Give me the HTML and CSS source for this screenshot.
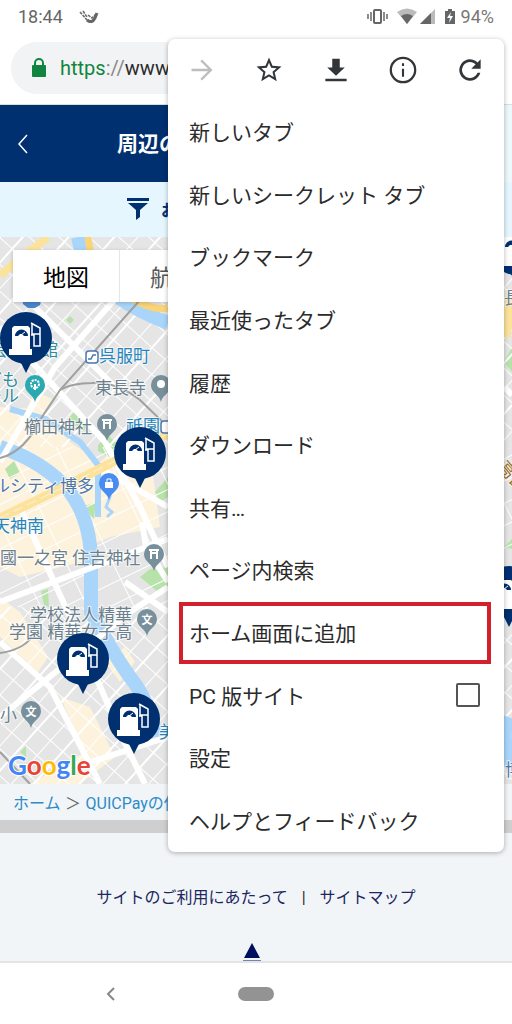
FILE: index.html
```html
<!DOCTYPE html>
<html lang="ja">
<head>
  <meta charset="UTF-8" />
  <meta name="viewport" content="width=device-width, initial-scale=1.0"/>
  <title>周辺の店舗</title>
  <link rel="stylesheet" href="styles.css">
</head>
<body>
  <div class="status-bar">
    <span class="clock">18:44</span>
    <svg class="status-call" width="20" height="16" viewBox="0 0 20 16" fill="none" stroke="#666">
      <path d="M8 11Q13 15 16 9L18 4" stroke-width="3"/>
      <path d="M1 3l7 8M4 2l4 6M9 6l4 3 4-4" stroke-width="1.500" stroke-dasharray="3 1"/>
    </svg>
    <svg class="status-icons" width="90" height="18" viewBox="0 0 90 18">
      <g fill="none" stroke="#666" stroke-width="2">
        <rect x="7" y="2" width="7" height="13" rx="1"/>
        <path d="M4 4v9M17 4v9M1 6v5M20 6v5" stroke-width="1.500"/>
      </g>
      <path d="M30 4Q40-3 50 4L40 16z" fill="#bbb"/>
      <path d="M34 8Q40 4 46 8L40 16z" fill="#666"/>
      <path d="M68 1v15H53z" fill="#bbb"/>
      <path d="M64 5v11H53z" fill="#666"/>
      <path d="M78 3h3V1h4v2h3v13H78z" fill="#666"/>
      <path d="M84 4l-4 6h3l-1 5 4-7h-3z" fill="#fff"/>
    </svg>
    <span class="battery">94%</span>
  </div>

  <div class="toolbar">
    <div class="address">
      <svg width="16" height="20" viewBox="0 0 16 20">
        <rect x="1" y="7" width="14" height="12" rx="1" fill="#11853f"/>
        <path d="M4 8V5a4 4 0 0 1 8 0v3" fill="none" stroke="#11853f" stroke-width="2"/>
      </svg>
      <span class="url"><span class="scheme">https</span><span class="slashes">://</span>www.</span>
    </div>
  </div>

  <div class="page">
    <header class="page-header">
      <a href="#" class="back" aria-label="戻る">
        <svg width="12" height="20" viewBox="0 0 12 20" fill="none" stroke="#fff" stroke-width="1.500"><path d="M10 1L2 10l8 9"/></svg>
      </a>
      <h1>周辺の店舗</h1>
    </header>
    <div class="filter">
      <button type="button">
        <svg width="22" height="22" viewBox="0 0 22 22" fill="#003070">
          <path d="M0 0h22v3H0zM1 5h20l-8 7v7l-4 3V12z"/>
        </svg>
        お店を絞り込む
      </button>
    </div>

    <div class="map">
      <svg class="map-canvas" width="512" height="547" viewBox="0 0 512 547">
        <defs>
          <pattern id="blocks" width="34" height="20" patternUnits="userSpaceOnUse" patternTransform="rotate(42)">
            <path d="M0 0H34M0 0V20M17 0V20" stroke="#fff" stroke-width="2"/>
          </pattern>
          <pattern id="blocksWide" width="42" height="20" patternUnits="userSpaceOnUse" patternTransform="rotate(-26)">
            <path d="M0 0H42M0 0V20" stroke="#fff" stroke-width="2"/>
          </pattern>
          <g id="station">
            <path d="M-8 19h16L0 35z" fill="#003070"/>
            <circle r="26" fill="#003070"/>
            <path d="M-14-10L-12-12H2L4-10V11H6V17H-17V11H-14z" fill="#fff"/>
            <path d="M-11-2A6 6 0 0 1 2-2H-2L-4-4H-6L-8-2z" fill="#003070"/>
            <path d="M-5-3L-1-6" stroke="#fff"/>
            <path d="M5-15L14-10V8H8V-3H5M6-14V-4H14" fill="none" stroke="#fff" stroke-width="1.500"/>
          </g>
          <path id="drop" d="M0 16C-2 8-10 7-10-1A10 10 0 0 1 10-1C10 7 2 8 0 16z"/>
          <path id="torii" d="M-5-4H5M-4-1H4M-3-4V5M3-4V5" fill="none" stroke="#fff" stroke-width="2"/>
        </defs>

        <rect width="512" height="547" fill="#e5e5e5"/>
        <!-- shopping areas -->
        <g fill="#fdf2dc">
          <path d="M35 154L52 162 42 178 25 175z"/>
          <path d="M0 170L40 172 70 205 100 225 128 200 150 215 160 290 110 300 40 330 0 300z"/>
          <path d="M0 290L45 270 85 300 82 325 20 340 0 330z"/>
          <path d="M0 360L20 375 48 420 38 435 0 400z"/>
          <path d="M60 460L90 470 115 520 80 547 30 547 85 515z"/>
          <path d="M105 425L125 410 135 425 120 445z"/>
        </g>
        <!-- parks -->
        <g fill="#b7e3ab">
          <path d="M66 83L70 79 74 83 70 87z"/>
          <path d="M68 182L75 174 92 185 84 194z"/>
          <path d="M98 208L108 198 122 212 114 223 98 214z"/>
          <path d="M5 232L14 224 20 236 10 242z"/>
          <path d="M82 270L96 265 94 282z"/>
          <path d="M155 255L168 240V260L160 265z"/>
          <path d="M140 340L150 332 168 330V352L158 355z"/>
          <path d="M41 354L48 352 49 370 44 368z"/>
          <path d="M20 515L26 509 26 520z"/>
          <path d="M504 125L512 110V135zM504 310L512 302V312z"/>
        </g>
        <rect width="512" height="210" fill="url(#blocks)"/>
        <rect y="210" width="512" height="160" fill="url(#blocksWide)"/>
        <rect y="370" width="512" height="177" fill="url(#blocks)"/>

        <!-- rivers -->
        <g fill="none" stroke="#a9d5fb">
          <path d="M78 0L84 25Q106 62 168 86" stroke-width="14"/>
          <path d="M0 210Q45 225 70 255Q92 285 91 330V375Q112 415 130 440Q150 465 156 500" stroke-width="14"/>
          <path d="M10 172L45 182 80 205 98 228V280" stroke-width="6"/>
          <path d="M110 250V260L106 270 112 275 107 280" stroke-width="3"/>
          <path d="M508 480Q500 500 512 530" stroke-width="14"/>
        </g>

        <!-- roads -->
        <g fill="none" stroke="#fff" stroke-width="6">
          <path d="M0 90L105 205 140 270 168 330M130 45L55 130 0 225M35 70L120 155"/>
          <path d="M98 230L168 270M142 285L146 310 168 345M0 365L168 302"/>
          <path d="M20 270L70 380 122 500 145 547M0 480L130 375 168 350"/>
          <path d="M60 535L168 500M0 405L50 450 100 547M125 345L168 375"/>
          <path d="M504 340L512 350M504 150L512 158"/>
        </g>
        <g fill="none" stroke="#f9d479">
          <path d="M88 0Q91 35 121 55T168 71" stroke-width="7"/>
          <path d="M0 38L48 0" stroke="#fbe39b" stroke-width="8"/>
          <path d="M0 281L60 252 168 197" stroke="#fce29a" stroke-width="9"/>
          <path d="M0 281L60 252 168 197" stroke="#fdf2dc" stroke-dasharray="10 5"/>
          <path d="M504 100L512 60" stroke="#fbe39b" stroke-width="12"/>
        </g>
        <g fill="none" stroke="#a0a0a0" stroke-width="2">
          <path d="M140 63L60 153 42 180Q25 215 0 221"/>
          <path d="M60 153Q72 146 92 146Q115 144 140 163L168 190"/>
          <path d="M0 416Q22 413 32 400M0 515L30 547"/>
        </g>

        <!-- place markers -->
        <path d="M22 60H42L40 68 35 71H28L23 67z" fill="#4b85c9"/>
        <use href="#drop" x="35" y="149" fill="#2ba9b0"/>
        <circle cx="35" cy="147" r="4" fill="none" stroke="#fff" stroke-width="2" stroke-dasharray="2 1"/>
        <path d="M35 147V153" stroke="#fff" stroke-width="2"/>
        <use href="#drop" x="161" y="149" fill="#78909c"/>
        <circle cx="161" cy="147" r="4" fill="#fff"/>
        <use href="#drop" x="107" y="188" fill="#78909c"/>
        <use href="#torii" x="107" y="187"/>
        <use href="#drop" x="109" y="247" fill="#4a8df0"/>
        <path d="M105 245H113V251H105z" fill="#fff"/>
        <path d="M107 246V242H111V246" fill="none" stroke="#fff"/>
        <use href="#drop" x="154" y="318" fill="#78909c"/>
        <use href="#torii" x="154" y="317"/>
        <use href="#drop" x="147" y="383" fill="#78909c"/>
        <use href="#drop" x="31" y="475" fill="#78909c"/>
        <g class="school" text-anchor="middle">
          <text x="147" y="387">文</text>
          <text x="31" y="479">文</text>
        </g>
        <g fill="#fff" stroke="#4a78b0" stroke-width="1.500">
          <rect x="86" y="114" width="12" height="12" rx="3"/>
          <rect x="161" y="184" width="12" height="12" rx="3"/>
          <path d="M88 122H91L93 118H96" fill="none"/>
        </g>

        <g class="label transit">
          <text x="99" y="125">呉服町</text>
          <text x="126" y="195">祇園</text>
          <text x="-7" y="295">天神南</text>
          <text x="159" y="501">美</text>
        </g>
        <g class="label culture">
          <text x="-10" y="119">芸術会館</text>
          <text x="-32" y="149">こども</text>
          <text x="-32" y="165">ホール</text>
        </g>
        <g class="label place">
          <text x="95" y="157">東長寺</text>
          <text x="24" y="196">櫛田神社</text>
          <text x="-7" y="255" class="shop">ルシティ博多</text>
          <text x="0" y="327">國一之宮 住吉神社</text>
          <text x="30" y="384">学校法人精華</text>
          <text x="9" y="401">学園 精華女子高</text>
          <text x="0" y="484">小</text>
          <text x="504" y="67">長</text>
          <text x="505" y="539" class="shop">博</text>
        </g>
        <text class="label road" x="497" y="230" transform="rotate(50 497 230)">高宮</text>

        <use href="#station" x="26" y="101"/>
        <use href="#station" x="140" y="216"/>
        <use href="#station" x="83" y="422"/>
        <use href="#station" x="134" y="482"/>
        <use href="#station" x="516" y="12"/>
        <use href="#station" x="509" y="355"/>

        <text class="google" x="8" y="538"><tspan fill="#4285f4">G</tspan><tspan fill="#ea4335">o</tspan><tspan fill="#fbbc05">o</tspan><tspan fill="#4285f4">g</tspan><tspan fill="#34a853">l</tspan><tspan fill="#ea4335">e</tspan></text>
      </svg>
      <div class="map-type">
        <button type="button" class="active">地図</button>
        <button type="button">航空写真</button>
      </div>
    </div>

    <nav class="breadcrumb">
      <a href="#">ホーム</a><span>＞</span><a href="#">QUICPayの使えるお店</a>
    </nav>

    <footer class="page-footer">
      <div class="footer-links">
        <a href="#">サイトのご利用にあたって</a>
        <span>|</span>
        <a href="#">サイトマップ</a>
      </div>
      <a href="#" class="to-top" aria-label="ページの先頭へ">
        <svg width="18" height="18" viewBox="0 0 18 18"><path d="M9 0l8 15H1z" fill="#000f60"/><path d="M0 17.500h18" stroke="#7a80ac"/></svg>
      </a>
    </footer>
  </div>

  <div class="system-nav">
    <button type="button" aria-label="戻る">
      <svg width="10" height="14" viewBox="0 0 10 14" fill="none" stroke="#888" stroke-width="2"><path d="M8 1L2 7l6 6"/></svg>
    </button>
    <button type="button" aria-label="ホーム"><span class="home-pill"></span></button>
  </div>

  <div class="menu">
    <div class="menu-actions">
      <button type="button" aria-label="進む" disabled>
        <svg width="28" height="28" viewBox="0 0 24 24"><path d="M12 3l-1.400 1.400 6.600 6.600H3v2h14.200l-6.600 6.600L12 21l9-9z"/></svg>
      </button>
      <button type="button" aria-label="ブックマークに追加">
        <svg width="30" height="30" viewBox="0 0 24 24"><path d="M22 9.240l-7.190-.620L12 2 9.190 8.630 2 9.240l5.460 4.730L5.820 21 12 17.270 18.180 21l-1.630-7.030L22 9.240zM12 15.400l-3.760 2.270 1-4.280-3.320-2.880 4.380-.380L12 6.100l1.710 4.040 4.380.380-3.320 2.880 1 4.280L12 15.400z"/></svg>
      </button>
      <button type="button" aria-label="ダウンロード">
        <svg width="30" height="30" viewBox="0 0 24 24"><path d="M19 10h-4V3H9v7H5l7 6.500zM3.500 19v2h17v-2z"/></svg>
      </button>
      <button type="button" aria-label="情報">
        <svg width="32" height="32" viewBox="0 0 24 24"><path d="M11.200 7h1.600v2h-1.600zm0 4h1.600v6h-1.600zm.8-9a10 10 0 1 0 0 20 10 10 0 0 0 0-20zm0 18.300a8.300 8.300 0 1 1 0-16.600 8.300 8.300 0 0 1 0 16.600z"/></svg>
      </button>
      <button type="button" aria-label="再読み込み">
        <svg width="32" height="32" viewBox="0 0 24 24"><path d="M17.650 6.350A8 8 0 1 0 19.730 14h-2.080A6 6 0 1 1 12 6c1.660 0 3.140.690 4.220 1.780L13 11h7V4z"/></svg>
      </button>
    </div>
    <ul class="menu-list">
      <li><button type="button">新しいタブ</button></li>
      <li><button type="button">新しいシークレット タブ</button></li>
      <li><button type="button">ブックマーク</button></li>
      <li><button type="button">最近使ったタブ</button></li>
      <li><button type="button">履歴</button></li>
      <li><button type="button">ダウンロード</button></li>
      <li><button type="button">共有…</button></li>
      <li><button type="button">ページ内検索</button></li>
      <li class="highlight"><button type="button">ホーム画面に追加</button></li>
      <li><label for="desktopSite">PC 版サイト <input type="checkbox" id="desktopSite"></label></li>
      <li><button type="button">設定</button></li>
      <li><button type="button">ヘルプとフィードバック</button></li>
    </ul>
  </div>
</body>
</html>
```
FILE: styles.css
```css
* { box-sizing: border-box; }
body {
  margin: 0;
  min-height: 100vh;
  display: flex;
  flex-direction: column;
  position: relative;
  overflow-x: hidden;
  background: #fff;
  font-family: Roboto, "Noto Sans CJK JP", sans-serif;
  color: #2b2b2b;
}
button {
  padding: 0;
  border: none;
  background: none;
  font: inherit;
  color: inherit;
  cursor: pointer;
}
a { text-decoration: none; }
svg { display: block; }

/* browser chrome */
.status-bar {
  display: flex;
  align-items: center;
  height: 33px;
  padding: 0 18px;
  color: #666;
  font-size: 18px;
}
.status-call { margin-left: 16px; }
.status-icons { margin-left: auto; }
.battery { margin-left: 4px; color: #777; }
.toolbar {
  height: 72px;
  padding: 9px 56px 10px 11px;
  border-bottom: 1px solid #ddd;
}
.address {
  display: flex;
  align-items: center;
  gap: 13px;
  height: 52px;
  padding-left: 20px;
  border-radius: 26px;
  background: #f1f3f4;
  font-size: 20px;
}
.scheme { color: #11853f; }
.slashes { color: #888; }

/* web page */
.page {
  flex: 1;
  display: flex;
  flex-direction: column;
  background: #f1f5f7;
}
.page-header {
  display: flex;
  align-items: center;
  height: 77px;
  padding-left: 17px;
  margin-right: 8px;
  background: #003070;
  box-shadow: 8px 0 #edf8fc;
  color: #fff;
}
.page-header h1 {
  margin: 0 0 4px 88px;
  font-size: 21px;
  font-weight: bold;
}
.filter {
  height: 55px;
  padding-left: 127px;
  background: #e5f6ff;
  color: #003070;
}
.filter button {
  display: flex;
  align-items: center;
  gap: 12px;
  height: 54px;
  font-size: 16px;
  font-weight: bold;
}
.map {
  position: relative;
  height: 547px;
  overflow: hidden;
  background: #e5e5e5;
}
.map-type {
  position: absolute;
  top: 13px;
  left: 13px;
  display: flex;
  background: #fff;
  box-shadow: 0 1px 4px rgba(0,0,0,0.2);
}
.map-type button {
  height: 52px;
  padding: 0 30px;
  font-size: 23px;
  color: #565656;
}
.map-type .active {
  color: #000;
  border-right: 1px solid #e6e6e6;
}
.label {
  font-size: 17px;
  paint-order: stroke;
  stroke: #fff;
  stroke-width: 2px;
  stroke-opacity: 0.7;
}
.transit { fill: #2585bd; }
.culture { fill: #2b8c9e; }
.place { fill: #6b7f8c; }
.shop { fill: #4c77ad; }
.road { fill: #9c6b1e; }
.school {
  font-size: 11px;
  font-weight: bold;
  fill: #fff;
}
.google {
  font-family: Lato, sans-serif;
  font-size: 26px;
  font-weight: bold;
  paint-order: stroke;
  stroke: #fff;
  stroke-width: 2px;
}
.breadcrumb {
  display: flex;
  align-items: center;
  height: 49px;
  padding: 0 13px;
  border-bottom: 13px solid #cfcfcf;
  font-size: 16px;
  white-space: nowrap;
  overflow: hidden;
}
.breadcrumb a { color: #2d8cc8; }
.breadcrumb span {
  width: 25px;
  text-align: center;
  color: #666;
}
.page-footer {
  flex: 1;
  display: flex;
  flex-direction: column;
  align-items: center;
  justify-content: space-between;
  padding-top: 53px;
}
.footer-links {
  display: flex;
  gap: 14px;
  font-size: 16px;
  line-height: 24px;
}
.footer-links a { color: #22265f; }
.to-top { padding-right: 8px; }

.system-nav {
  display: grid;
  grid-template-columns: repeat(3, 1fr);
  height: 63px;
  padding: 0 38px;
  border-top: 2px solid #e2e4e5;
  background: #fff;
}
.system-nav button {
  display: flex;
  align-items: center;
  justify-content: center;
}
.home-pill {
  width: 36px;
  height: 14px;
  border-radius: 7px;
  background: #939393;
}

/* overflow menu, lies over the page */
.menu {
  position: absolute;
  top: 39px;
  right: 8px;
  display: flex;
  flex-direction: column;
  width: 336px;
  min-height: 813px;
  border-radius: 7px;
  background: #fff;
  box-shadow: 0 1px 5px rgba(0,0,0,0.3);
}
.menu-actions {
  display: flex;
  height: 62px;
}
.menu-actions button {
  flex: 1;
  display: flex;
  align-items: center;
  justify-content: center;
}
.menu-actions svg { fill: #333639; }
.menu-actions button:disabled svg { fill: #bdbdbd; }
.menu-list {
  flex: 1;
  display: grid;
  grid-auto-rows: 1fr;
  margin: 0;
  padding: 0;
  list-style: none;
  font-size: 21px;
}
.menu-list li { display: flex; }
.menu-list button,
.menu-list label {
  flex: 1;
  display: flex;
  align-items: center;
  justify-content: space-between;
  padding: 0 24px 2px 21px;
  text-align: left;
}
.menu-list .highlight {
  margin: 0 13px 0 11px;
  border: 4px solid #d3202d;
}
.menu-list .highlight button { padding: 0 6px 2px; }
.menu-list input {
  appearance: none;
  width: 24px;
  height: 24px;
  margin: 0;
  border: 2px solid #555;
  border-radius: 2px;
  background: #fff;
}
```
